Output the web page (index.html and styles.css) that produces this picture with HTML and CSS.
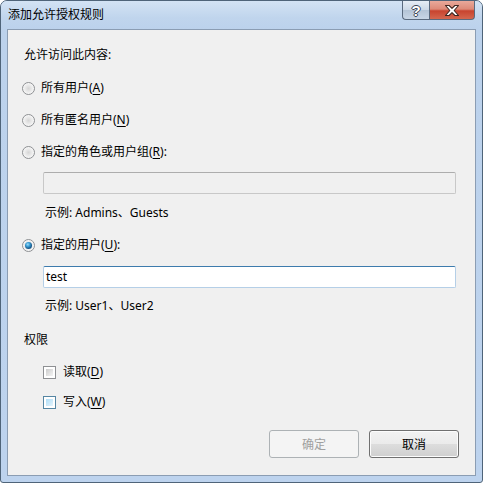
FILE: index.html
```html
<!DOCTYPE html>
<html lang="zh-CN">
<head>
<meta charset="utf-8">
<title>添加允许授权规则</title>
<link rel="stylesheet" href="styles.css">
</head>
<body>
<div class="window">
  <div class="titlebar">
    <span class="title">添加允许授权规则</span>
    <div class="caption-buttons">
      <div class="cap-btn help">?</div>
      <div class="cap-btn close">
        <svg class="xicon" width="18" height="13" viewBox="0 0 18 13"><path d="M2.5 1.5h3.6L9 4.3l2.9-2.8h3.6L11.2 6.5l4.3 5h-3.6L9 8.7l-2.9 2.8H2.5l4.3-5z" fill="#ffffff" stroke="#3e2620" stroke-width="1.1" stroke-linejoin="round"/></svg>
      </div>
    </div>
  </div>
  <div class="client">
    <div class="label">允许访问此内容:</div>
    <div class="option r1"><span class="radio"></span><span>所有用户(<u>A</u>)</span></div>
    <div class="option r2"><span class="radio"></span><span>所有匿名用户(<u>N</u>)</span></div>
    <div class="option r2"><span class="radio"></span><span>指定的角色或用户组(<u>R</u>):</span></div>
    <div class="textbox disabled t1"></div>
    <div class="example e1">示例: Admins、Guests</div>
    <div class="option r4"><span class="radio checked"></span><span>指定的用户(<u>U</u>):</span></div>
    <div class="textbox active t2">test</div>
    <div class="example e2">示例: User1、User2</div>
    <div class="label perm">权限</div>
    <div class="check c1"><span class="box"></span><span>读取(<u>D</u>)</span></div>
    <div class="check c2"><span class="box hover"></span><span>写入(<u>W</u>)</span></div>
    <div class="buttons">
      <div class="btn disabled">确定</div>
      <div class="btn">取消</div>
    </div>
  </div>
</div>
</body>
</html>
```

FILE: styles.css
```css
html, body {
  margin: 0;
  padding: 0;
  background: #ffffff;
}
body {
  font-family: "Noto Sans", "Noto Sans CJK SC", sans-serif;
  font-size: 12px;
  color: #000;
}
.window {
  width: 483px;
  height: 483px;
  box-sizing: border-box;
  border: 1px solid #4f6479;
  border-radius: 7px 7px 3px 3px;
  background: linear-gradient(180deg, #c6daf0 0px, #bcd2ec 30px, #bdd3ee 100%);
  display: flex;
  flex-direction: column;
  overflow: hidden;
}
.titlebar {
  height: 28px;
  flex: none;
  display: flex;
  justify-content: space-between;
  align-items: flex-start;
  background: linear-gradient(180deg, #d3e3f4 0%, #c0d5ed 60%, #bcd2ec 100%);
}
.title {
  margin: 6px 0 0 7px;
  line-height: 16px;
  color: #000;
}
.caption-buttons {
  display: flex;
  margin-right: 7px;
}
.cap-btn {
  height: 19px;
  box-sizing: border-box;
  border: 1px solid #5a6a7e;
  border-top: none;
  display: flex;
  align-items: center;
  justify-content: center;
}
.help {
  width: 27px;
  border-radius: 0 0 0 4px;
  border-right: none;
  background: linear-gradient(180deg, #e6edf5 0%, #ccd8e6 50%, #b4c4d6 51%, #c8d6e6 100%);
  color: #fff;
  font-family: "Liberation Sans", sans-serif;
  font-weight: bold;
  font-size: 15px;
  text-shadow: 1px 0 0 #3a4656, -1px 0 0 #3a4656, 0 1px 0 #3a4656, 0 -1px 0 #3a4656;
}
.close {
  width: 46px;
  border-radius: 0 0 4px 0;
  background: linear-gradient(180deg, #e9a99b 0%, #dd8a78 45%, #c8442f 55%, #d4674f 100%);
}
.xicon {
  display: block;
  flex: none;
}
.client {
  flex: 1;
  margin: 0 6px 6px 6px;
  border: 1px solid #8b9db3;
  background: #f0f0f0;
  display: flex;
  flex-direction: column;
  padding-left: 16px;
}
.label {
  line-height: 16px;
  margin-top: 17px;
}
.label.perm {
  margin-top: 18px;
}
.option {
  display: flex;
  align-items: center;
  gap: 6px;
  line-height: 16px;
  margin-left: -2px;
}
.option.r1 { margin-top: 17px; }
.option.r2 { margin-top: 16px; }
.option.r4 { margin-top: 16px; }
u { text-decoration: underline; text-underline-offset: 2px; }
.radio {
  width: 13px;
  height: 13px;
  box-sizing: border-box;
  border-radius: 50%;
  border: 1px solid #8e9093;
  background: radial-gradient(circle at 50% 50%, #d6d6d6 0, #e8e8e8 3px, #f4f4f4 5px, #ffffff 6px);
  flex: none;
  position: relative;
}
.radio.checked::after {
  content: "";
  position: absolute;
  left: 2px;
  top: 2px;
  width: 7px;
  height: 7px;
  border-radius: 50%;
  background: radial-gradient(circle at 40% 35%, #9fdcf8 0, #3b9fd6 2px, #1a5a8c 4px);
}
.textbox {
  width: 413px;
  height: 22px;
  box-sizing: border-box;
  margin-left: 19px;
  border: 1px solid #c0c0c0;
  border-top-color: #a8a8a8;
  border-radius: 2px;
  line-height: 20px;
  padding-left: 2px;
}
.textbox.disabled {
  background: #f0f0f0;
  margin-top: 12px;
  border-color: #c8c8c8;
  border-top-color: #adadad;
}
.textbox.active {
  background: #ffffff;
  margin-top: 13px;
  border-color: #b5cfe7;
  border-top-color: #3d7bad;
}
.example {
  line-height: 16px;
  margin-left: 21px;
  color: #000;
}
.example.e1 { margin-top: 11px; }
.example.e2 { margin-top: 10px; }
.check {
  display: flex;
  align-items: center;
  gap: 7px;
  line-height: 16px;
  margin-left: 19px;
}
.check.c1 { margin-top: 16px; }
.check.c2 { margin-top: 14px; }
.box {
  width: 13px;
  height: 13px;
  box-sizing: border-box;
  border: 1px solid #8e9093;
  background: #fff;
  flex: none;
  position: relative;
}
.box::after {
  content: "";
  position: absolute;
  left: 2px;
  top: 2px;
  right: 2px;
  bottom: 2px;
  background: linear-gradient(135deg, #cbcbcb 0%, #e4e4e4 60%, #f4f4f4 100%);
}
.box.hover {
  border-color: #5586a3;
}
.box.hover::after {
  background: linear-gradient(135deg, #b1dff8 0%, #cdeafa 60%, #e6f5fd 100%);
}
.buttons {
  margin-top: 20px;
  display: flex;
  justify-content: flex-end;
  gap: 10px;
  margin-right: 16px;
}
.btn {
  width: 90px;
  height: 28px;
  box-sizing: border-box;
  border: 1px solid #707070;
  border-radius: 3px;
  background: linear-gradient(180deg, #f2f2f2 0%, #ebebeb 50%, #dddddd 51%, #cfcfcf 100%);
  display: flex;
  align-items: center;
  justify-content: center;
  font-size: 12px;
  box-shadow: inset 0 0 0 1px #fcfcfc;
}
.btn.disabled {
  border-color: #adb2b5;
  background: #f4f4f4;
  color: #a0a0a0;
  box-shadow: none;
}
```
